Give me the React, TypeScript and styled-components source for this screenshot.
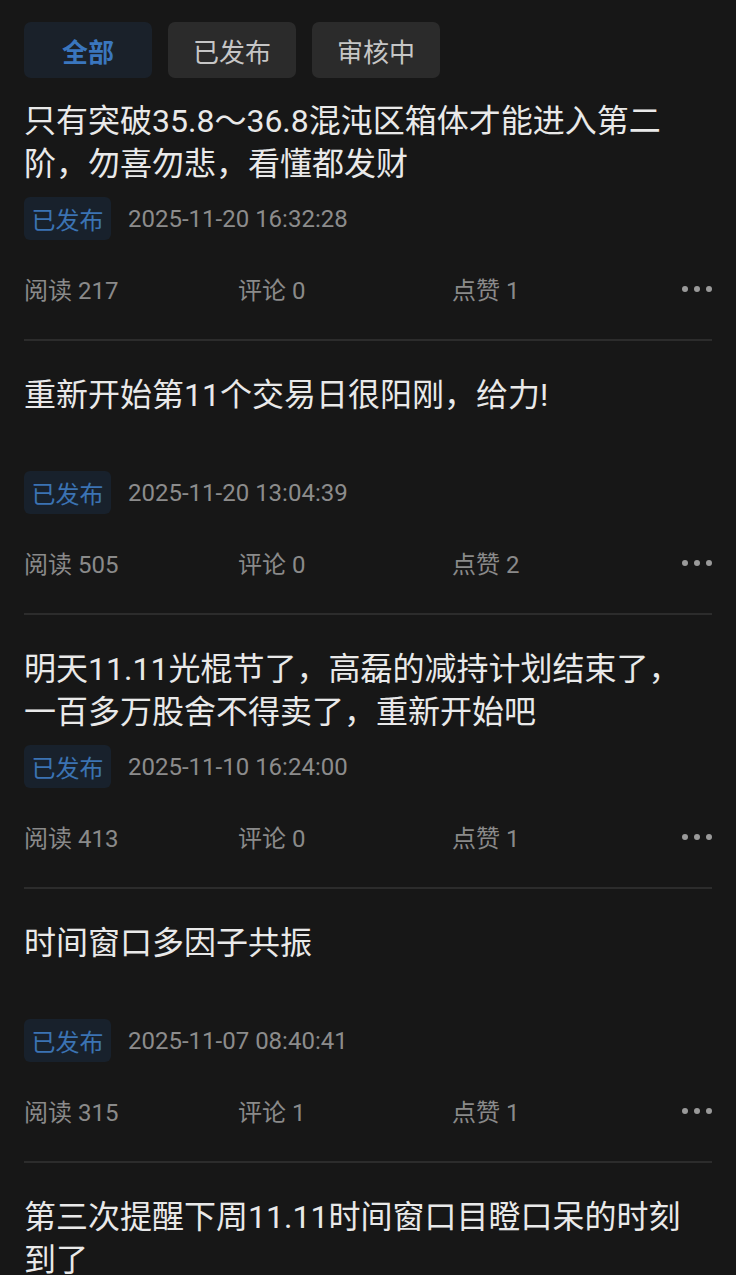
import React from "react";
import styled, { createGlobalStyle } from "styled-components";

const Global = createGlobalStyle`
  html, body {
    margin: 0;
    padding: 0;
    background: #171717;
  }
  body {
    font-family: Roboto, "Noto Sans CJK SC", sans-serif;
    -webkit-font-smoothing: antialiased;
  }
`;

const Page = styled.div`
  background: #171717;
  height: 1275px;
  overflow: hidden;
`;

const TabBar = styled.div`
  display: flex;
  gap: 16px;
  padding: 22px 24px 0;
`;

const Tab = styled.div<{ $active?: boolean }>`
  height: 56px;
  width: 128px;
  border-radius: 7px;
  display: flex;
  align-items: center;
  justify-content: center;
  font-size: 26px;
  font-weight: ${(p) => (p.$active ? 700 : 400)};
  color: ${(p) => (p.$active ? "#3a76be" : "#c6c6c6")};
  background: ${(p) => (p.$active ? "#1a212a" : "#2b2b2b")};
`;

const List = styled.div`
  padding: 0 24px;
`;

const Card = styled.div<{ $first?: boolean }>`
  padding: ${(p) => (p.$first ? 22 : 33)}px 0 31px;
  border-bottom: 2px solid #2c2c2c;
  display: flex;
  flex-direction: column;
  align-items: flex-start;
`;

const Title = styled.div`
  font-size: 32px;
  line-height: 43px;
  min-height: 86px;
  color: #e9e9e9;
`;

const MetaRow = styled.div`
  display: flex;
  align-items: center;
  gap: 17px;
  margin-top: 11px;
`;

const Badge = styled.span`
  height: 43px;
  padding: 0 7.5px;
  border-radius: 6px;
  background: #18212c;
  color: #3b73b3;
  font-size: 24px;
  display: inline-flex;
  align-items: center;
`;

const DateText = styled.span`
  font-size: 24px;
  color: #8c8c8c;
`;

const Stats = styled.div`
  margin-top: 28px;
  height: 40px;
  width: 100%;
  display: grid;
  grid-template-columns: 214px 214px 1fr auto;
  align-items: center;
`;

const Stat = styled.span`
  font-size: 24px;
  color: #8a8a8a;
`;

const More = styled.div`
  display: flex;
  gap: 6px;
  align-items: center;
  padding-top: 2px;
`;

const Dot = styled.span`
  width: 6px;
  height: 6px;
  border-radius: 50%;
  background: #9a9a9a;
`;

type Post = {
  title: string;
  date: string;
  read: number;
  comment: number;
  like: number;
};

const posts: Post[] = [
  {
    title: "只有突破35.8～36.8混沌区箱体才能进入第二阶，勿喜勿悲，看懂都发财",
    date: "2025-11-20 16:32:28",
    read: 217,
    comment: 0,
    like: 1,
  },
  {
    title: "重新开始第11个交易日很阳刚，给力!",
    date: "2025-11-20 13:04:39",
    read: 505,
    comment: 0,
    like: 2,
  },
  {
    title: "明天11.11光棍节了，高磊的减持计划结束了，一百多万股舍不得卖了，重新开始吧",
    date: "2025-11-10 16:24:00",
    read: 413,
    comment: 0,
    like: 1,
  },
  {
    title: "时间窗口多因子共振",
    date: "2025-11-07 08:40:41",
    read: 315,
    comment: 1,
    like: 1,
  },
  {
    title: "第三次提醒下周11.11时间窗口目瞪口呆的时刻到了",
    date: "2025-11-06 09:12:05",
    read: 298,
    comment: 0,
    like: 1,
  },
];

export default function App() {
  return (
    <Page>
      <Global />
      <TabBar>
        <Tab $active>全部</Tab>
        <Tab>已发布</Tab>
        <Tab>审核中</Tab>
      </TabBar>
      <List>
        {posts.map((p, i) => (
          <Card key={i} $first={i === 0}>
            <Title>{p.title}</Title>
            <MetaRow>
              <Badge>已发布</Badge>
              <DateText>{p.date}</DateText>
            </MetaRow>
            <Stats>
              <Stat>阅读 {p.read}</Stat>
              <Stat>评论 {p.comment}</Stat>
              <Stat>点赞 {p.like}</Stat>
              <More>
                <Dot />
                <Dot />
                <Dot />
              </More>
            </Stats>
          </Card>
        ))}
      </List>
    </Page>
  );
}
